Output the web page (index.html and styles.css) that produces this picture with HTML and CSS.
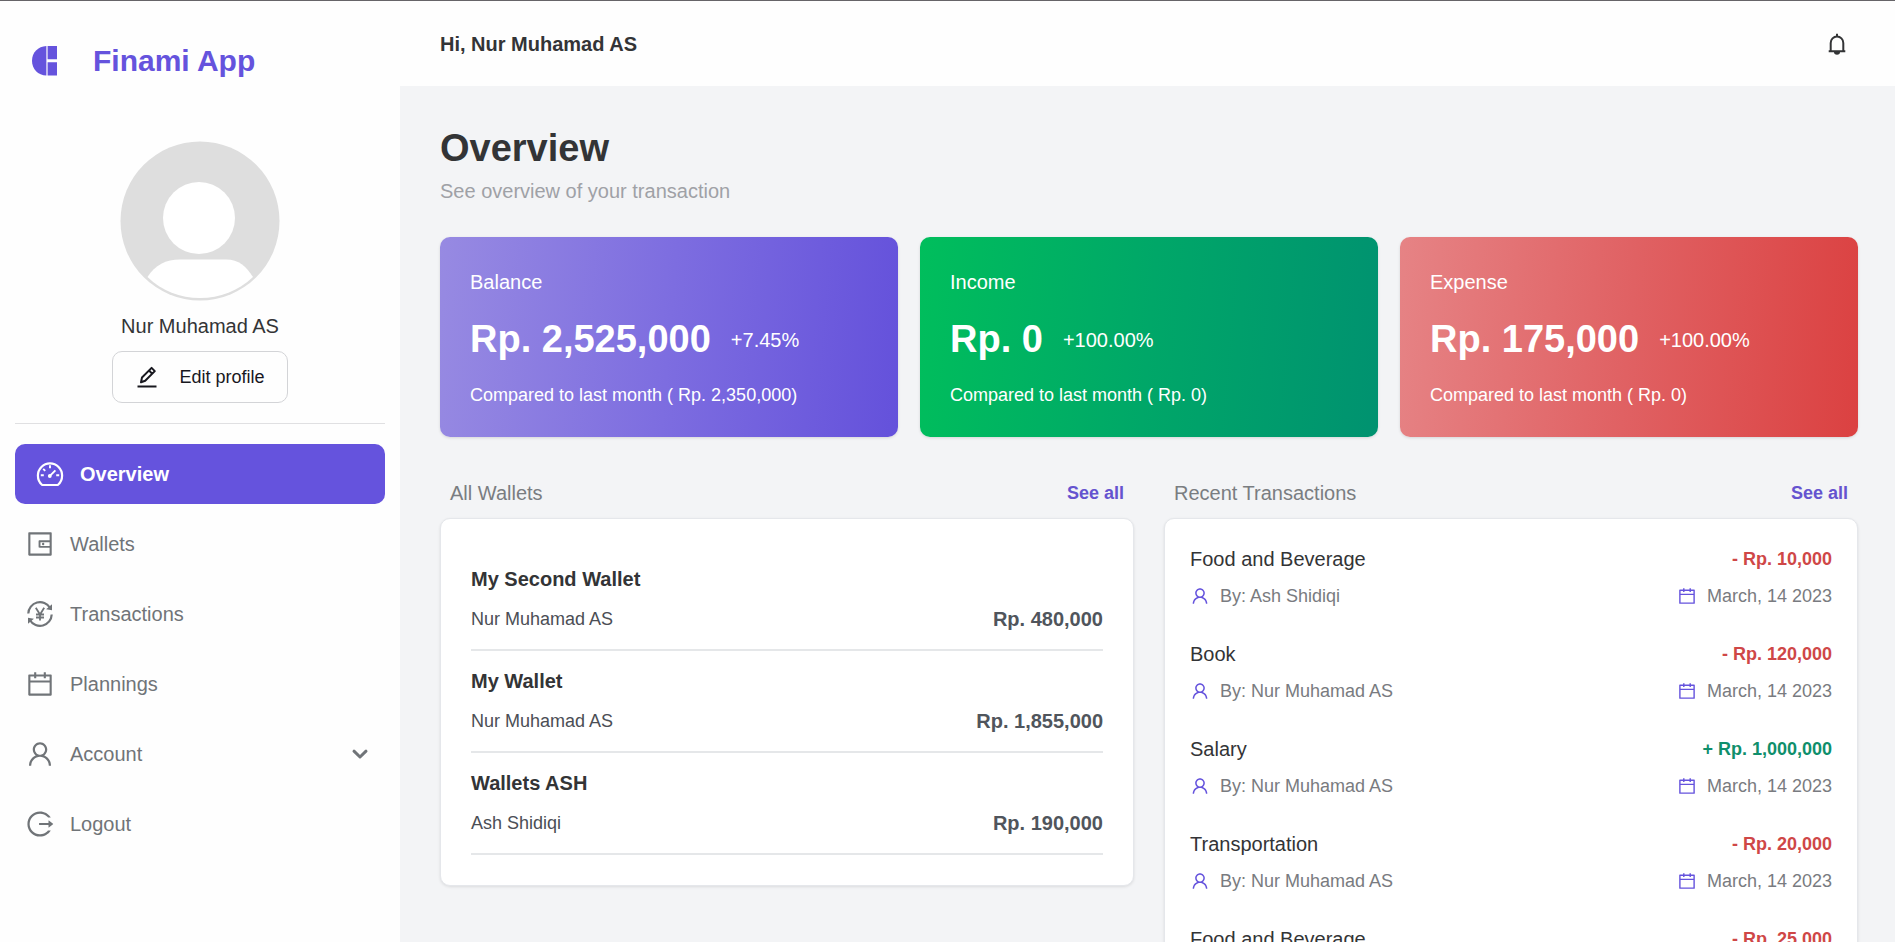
FILE: index.html
```html
<!DOCTYPE html>
<html lang="en">
<head>
<meta charset="utf-8">
<title>Finami App</title>
<meta name="viewport" content="width=device-width, initial-scale=1">
<link rel="stylesheet" href="styles.css">
</head>
<body>
<svg class="sprite" aria-hidden="true">
  <symbol id="user" viewBox="0 0 1024 1024"><path d="M858.5 763.6a374 374 0 0 0-80.6-119.5 375.63 375.63 0 0 0-119.5-80.6c-.4-.2-.8-.3-1.2-.5C719.5 518 760 444.7 760 362c0-137-111-248-248-248S264 225 264 362c0 82.700 40.500 156 102.800 201.100-.4.2-.8.3-1.200.5-44.800 18.900-85 46-119.500 80.600a375.630 375.630 0 0 0-80.600 119.500A371.700 371.700 0 0 0 136 901.800a8 8 0 0 0 8 8.200h60c4.400 0 7.900-3.500 8-7.800 2-77.200 33-149.500 87.800-204.300 56.700-56.700 132-87.900 212.200-87.900s155.500 31.200 212.200 87.900C779 752.700 810 825 812 902.200c.1 4.400 3.600 7.800 8 7.800h60a8 8 0 0 0 8-8.200c-1-47.800-10.900-94.300-29.500-138.200zM512 534c-45.900 0-89.100-17.900-121.600-50.400S340 407.900 340 362c0-45.900 17.900-89.100 50.400-121.600S466.100 190 512 190s89.100 17.900 121.600 50.400S684 316.100 684 362c0 45.900-17.900 89.100-50.400 121.600S557.900 534 512 534z"/></symbol>
  <symbol id="calendar" viewBox="0 0 1024 1024"><path d="M880 184H712v-64c0-4.400-3.600-8-8-8h-56c-4.400 0-8 3.600-8 8v64H384v-64c0-4.400-3.600-8-8-8h-56c-4.400 0-8 3.600-8 8v64H144c-17.700 0-32 14.300-32 32v664c0 17.700 14.300 32 32 32h736c17.700 0 32-14.300 32-32V216c0-17.700-14.300-32-32-32zm-40 656H184V460h656v380zM184 392V256h128v48c0 4.400 3.600 8 8 8h56c4.400 0 8-3.600 8-8v-48h256v48c0 4.400 3.600 8 8 8h56c4.400 0 8-3.600 8-8v-48h128v136H184z"/></symbol>
  <symbol id="wallet" viewBox="0 0 1024 1024"><path d="M880 112H144c-17.700 0-32 14.300-32 32v736c0 17.700 14.300 32 32 32h736c17.700 0 32-14.300 32-32V144c0-17.700-14.300-32-32-32zm-40 464H528V448h312v128zm0 264H184V184h656v200H496c-17.700 0-32 14.300-32 32v192c0 17.700 14.300 32 32 32h344v200zM580 512a40 40 0 1 0 80 0 40 40 0 1 0-80 0z"/></symbol>
  <symbol id="logout" viewBox="0 0 1024 1024"><path d="M868 732h-70.300c-4.800 0-9.300 2.100-12.300 5.800-7 8.500-14.500 16.700-22.400 24.500a353.840 353.840 0 0 1-112.700 75.900A352.800 352.800 0 0 1 512.400 866c-47.900 0-94.300-9.400-137.900-27.800a353.840 353.840 0 0 1-112.700-75.900 353.280 353.280 0 0 1-76-112.500C167.300 606.200 158 559.900 158 512s9.400-94.200 27.800-137.800c17.800-42.100 43.400-80 76-112.500s70.500-58.100 112.700-75.900c43.600-18.400 90-27.800 137.900-27.800 47.900 0 94.300 9.300 137.900 27.800 42.200 17.800 80.100 43.400 112.700 75.900 7.900 7.900 15.300 16.100 22.400 24.500 3 3.700 7.600 5.800 12.300 5.800H868c6.300 0 10.200-7 6.700-12.300C798 160.500 663.800 81.600 511.300 82 271.700 82.600 79.600 277.100 82 516.400 84.400 751.900 276.200 942 512.400 942c152.100 0 285.700-78.800 362.300-197.700 3.400-5.300-.4-12.300-6.700-12.300zm88.900-226.300L815 393.700c-5.300-4.200-13-.4-13 6.300v76H488c-4.400 0-8 3.600-8 8v56c0 4.400 3.600 8 8 8h314v76c0 6.700 7.800 10.500 13 6.300l141.900-112a8 8 0 0 0 0-12.600z"/></symbol>
  <symbol id="dashboard" viewBox="0 0 30 30"><g fill="none" stroke="currentColor" stroke-width="2.200" stroke-linejoin="round"><path d="M7.200 26C4.300 23.700 2.900 20.500 2.900 16.500a12.100 12.100 0 0 1 24.200 0c0 4-1.400 7.200-4.300 9.500z"/><path d="M15 6.200v3M5.800 16.300h3M21.200 16.300h3M8.200 9.800l2 2M14.600 17.200l5.800-5.800" stroke-width="1.900"/></g><circle cx="14.800" cy="17" r="1.900"/></symbol>
  <symbol id="transaction" viewBox="0 0 30 30"><g fill="none" stroke="currentColor" stroke-width="2.200"><path d="M3.300 14.500A11.700 11.700 0 0 1 25 8.800M26.700 15.500A11.700 11.700 0 0 1 5 21.200"/><path d="M10.800 8.800l4.200 6.700 4.200-6.700M15 15.500v6M11 15.500h8M11 18.500h8" stroke-width="1.800"/></g><path d="M27 5.300v5.900l-5.900-1zM3 24.700v-5.900l5.900 1z"/></symbol>
  <symbol id="bell" viewBox="0 0 24 24"><g fill="none" stroke="currentColor" stroke-width="2"><path d="M5.700 18.500V11a6.300 6.500 0 0 1 12.600 0v7.500M3.700 19.200h16.600M12 5V1.800"/></g><path d="M9 20h6a3 2.800 0 0 1-6 0z"/></symbol>
  <symbol id="edit" viewBox="0 0 24 24"><g fill="none" stroke="currentColor" stroke-width="2" stroke-linejoin="round"><path d="M6 17.300l1-4.800 9.600-9.600 3.200 3.200-9.600 9.600zM14 5.500l3.200 3.200"/><path d="M2.500 21.500h19"/></g></symbol>
  <symbol id="chevron" viewBox="0 0 20 20"><path d="M4 7.200l6 5.800 6-5.800" fill="none" stroke="currentColor" stroke-width="3" stroke-linecap="round" stroke-linejoin="round"/></symbol>
</svg>
<div class="app">
  <aside class="sidebar">
    <a class="brand" href="#">
      <svg class="brand-logo" viewBox="0 0 25 30" aria-hidden="true"><path d="M14.400 0v29.500C6 29.500 0 23 0 14.800S6 .3 14.400 0z"/><path d="M15.600 0H25v13.200h-9.400zM15.600 16.200H25v13.300h-9.400z"/></svg>
      <span>Finami App</span>
    </a>
    <div class="profile">
      <svg class="avatar" viewBox="0 0 160 160" role="img" aria-label="Profile picture"><circle cx="80" cy="80" r="79.500" fill="#dedede"/><circle cx="79" cy="77" r="36" fill="#fff"/><path d="M27.500 136C35 124 46 118.500 60 118.500h46c13 0 20 7 27 17.500-15 14-33 21-53 21s-38-7-52.500-21z" fill="#fff"/></svg>
      <p class="profile-name">Nur Muhamad AS</p>
      <button class="edit-button" type="button"><svg class="icon-edit" aria-hidden="true"><use href="#edit"/></svg>Edit profile</button>
    </div>
    <nav class="nav">
      <a class="nav-item active" href="#" aria-current="page"><svg class="icon" aria-hidden="true"><use href="#dashboard"/></svg>Overview</a>
      <a class="nav-item" href="#"><svg class="icon" aria-hidden="true"><use href="#wallet"/></svg>Wallets</a>
      <a class="nav-item" href="#"><svg class="icon" aria-hidden="true"><use href="#transaction"/></svg>Transactions</a>
      <a class="nav-item" href="#"><svg class="icon" aria-hidden="true"><use href="#calendar"/></svg>Plannings</a>
      <button class="nav-item" type="button" aria-expanded="false"><svg class="icon" aria-hidden="true"><use href="#user"/></svg>Account<svg class="chevron" aria-hidden="true"><use href="#chevron"/></svg></button>
      <a class="nav-item" href="#"><svg class="icon" aria-hidden="true"><use href="#logout"/></svg>Logout</a>
    </nav>
  </aside>
  <div class="content">
    <header class="topbar">
      <p class="greeting">Hi, Nur Muhamad AS</p>
      <button class="bell-button" type="button" aria-label="Notifications"><svg class="icon-bell" aria-hidden="true"><use href="#bell"/></svg></button>
    </header>
    <main class="main">
      <h1 class="title">Overview</h1>
      <p class="subtitle">See overview of your transaction</p>
      <section class="stats" aria-label="Summary">
        <article class="stat balance"><h2 class="stat-label">Balance</h2><p class="stat-row"><strong class="stat-amount">Rp. 2,525,000</strong><span>+7.45%</span></p><p class="stat-note">Compared to last month ( Rp. 2,350,000)</p></article>
        <article class="stat income"><h2 class="stat-label">Income</h2><p class="stat-row"><strong class="stat-amount">Rp. 0</strong><span>+100.00%</span></p><p class="stat-note">Compared to last month ( Rp. 0)</p></article>
        <article class="stat expense"><h2 class="stat-label">Expense</h2><p class="stat-row"><strong class="stat-amount">Rp. 175,000</strong><span>+100.00%</span></p><p class="stat-note">Compared to last month ( Rp. 0)</p></article>
      </section>
      <div class="columns">
        <section>
          <div class="section-head"><h2 class="section-title">All Wallets</h2><a class="see-all" href="#">See all</a></div>
          <ul class="panel wallets">
            <li class="wallet"><h3 class="wallet-name">My Second Wallet</h3><div class="line"><span class="owner">Nur Muhamad AS</span><span class="wallet-amount">Rp. 480,000</span></div></li>
            <li class="wallet"><h3 class="wallet-name">My Wallet</h3><div class="line"><span class="owner">Nur Muhamad AS</span><span class="wallet-amount">Rp. 1,855,000</span></div></li>
            <li class="wallet"><h3 class="wallet-name">Wallets ASH</h3><div class="line"><span class="owner">Ash Shidiqi</span><span class="wallet-amount">Rp. 190,000</span></div></li>
          </ul>
        </section>
        <section>
          <div class="section-head"><h2 class="section-title">Recent Transactions</h2><a class="see-all" href="#">See all</a></div>
          <ul class="panel transactions">
            <li class="transaction"><div class="line"><h3 class="category">Food and Beverage</h3><span class="amount">- Rp. 10,000</span></div><div class="line"><span class="meta"><svg class="icon-small" aria-hidden="true"><use href="#user"/></svg>By: Ash Shidiqi</span><span class="meta"><svg class="icon-small" aria-hidden="true"><use href="#calendar"/></svg>March, 14 2023</span></div></li>
            <li class="transaction"><div class="line"><h3 class="category">Book</h3><span class="amount">- Rp. 120,000</span></div><div class="line"><span class="meta"><svg class="icon-small" aria-hidden="true"><use href="#user"/></svg>By: Nur Muhamad AS</span><span class="meta"><svg class="icon-small" aria-hidden="true"><use href="#calendar"/></svg>March, 14 2023</span></div></li>
            <li class="transaction"><div class="line"><h3 class="category">Salary</h3><span class="amount plus">+ Rp. 1,000,000</span></div><div class="line"><span class="meta"><svg class="icon-small" aria-hidden="true"><use href="#user"/></svg>By: Nur Muhamad AS</span><span class="meta"><svg class="icon-small" aria-hidden="true"><use href="#calendar"/></svg>March, 14 2023</span></div></li>
            <li class="transaction"><div class="line"><h3 class="category">Transportation</h3><span class="amount">- Rp. 20,000</span></div><div class="line"><span class="meta"><svg class="icon-small" aria-hidden="true"><use href="#user"/></svg>By: Nur Muhamad AS</span><span class="meta"><svg class="icon-small" aria-hidden="true"><use href="#calendar"/></svg>March, 14 2023</span></div></li>
            <li class="transaction"><div class="line"><h3 class="category">Food and Beverage</h3><span class="amount">- Rp. 25,000</span></div></li>
          </ul>
        </section>
      </div>
    </main>
  </div>
</div>
</body>
</html>
```
FILE: styles.css
```css
* {
  box-sizing: border-box;
  margin: 0;
  padding: 0;
}

body {
  font-family: "Liberation Sans", Arial, sans-serif;
  font-size: 20px;
  line-height: 30px;
  color: #333436;
  background: #f3f4f6;
}

h1, h2, h3 {
  font-size: inherit;
  font-weight: inherit;
}

a {
  color: inherit;
  text-decoration: none;
}

ul {
  list-style: none;
}

button {
  font: inherit;
  color: inherit;
  background: none;
  border: 0;
  cursor: pointer;
}

svg {
  flex: none;
  fill: currentColor;
}

.sprite {
  display: none;
}

.app {
  display: flex;
  height: 100vh;
  overflow: hidden;
  border-top: 1px solid #666468;
}

/* Sidebar */
.sidebar {
  flex: 0 0 400px;
  padding: 0 15px;
  background: #fefefe;
}

.brand {
  display: flex;
  align-items: center;
  gap: 36px;
  padding: 37px 17px 0;
  font-size: 30px;
  line-height: 45px;
  font-weight: 700;
  color: #6553dd;
}

.brand-logo {
  width: 25px;
  height: 30px;
}

.profile {
  display: flex;
  flex-direction: column;
  align-items: center;
  padding: 58px 0 20px;
  border-bottom: 1px solid #e0e0e2;
}

.avatar {
  width: 160px;
  height: 160px;
}

.profile-name {
  padding: 10px 0;
}

.edit-button {
  display: flex;
  align-items: center;
  gap: 20px;
  height: 52px;
  padding: 0 22px;
  font-size: 18px;
  color: #18181f;
  border: 1px solid #d3d4d7;
  border-radius: 10px;
}

.icon-edit {
  width: 24px;
  height: 24px;
}

.nav {
  display: flex;
  flex-direction: column;
  gap: 10px;
  padding-top: 20px;
}

.nav-item {
  display: flex;
  align-items: center;
  gap: 15px;
  height: 60px;
  padding: 0 15px 0 10px;
  color: #707478;
  border-radius: 10px;
}

.nav-item.active {
  padding-left: 20px;
  font-weight: 700;
  color: #fff;
  background: #6553dd;
}

.icon {
  width: 30px;
  height: 30px;
}

.chevron {
  width: 20px;
  height: 20px;
  margin-left: auto;
}

/* Content */
.content {
  flex: 1;
  min-width: 0;
}

.topbar {
  display: flex;
  align-items: center;
  justify-content: space-between;
  height: 85px;
  padding: 0 46px 0 40px;
  background: #fefefe;
}

.greeting {
  font-weight: 700;
}

.bell-button {
  display: flex;
}

.icon-bell {
  width: 24px;
  height: 24px;
}

.main {
  padding: 40px 37px 40px 40px;
}

.title {
  font-size: 38px;
  line-height: 45px;
  font-weight: 700;
}

.subtitle {
  padding: 5px 0 31px;
  color: #9fa1a6;
}

.stats {
  display: grid;
  grid-template-columns: repeat(3, 1fr);
  gap: 22px;
}

.stat {
  padding: 30px 30px 27px;
  color: #fff;
  border-radius: 10px;
  box-shadow: 0 1px 3px rgba(0, 0, 0, 0.12);
}

.balance {
  background: linear-gradient(95deg, #978ae2, #7d6de0 50%, #6451db);
}

.income {
  background: linear-gradient(95deg, #00be5c, #00a768 50%, #009270);
}

.expense {
  background: linear-gradient(95deg, #e68385, #e06163 50%, #db4141);
}

.stat-row {
  display: flex;
  align-items: center;
  gap: 20px;
  padding: 20px 0 18px;
}

.stat-amount {
  font-size: 38px;
  line-height: 45px;
}

.stat-note {
  font-size: 18px;
}

.columns {
  display: grid;
  grid-template-columns: 1fr 1fr;
  align-items: start;
  gap: 30px;
  padding-top: 41px;
}

.section-head {
  display: flex;
  align-items: center;
  justify-content: space-between;
  padding: 0 10px 10px;
}

.section-title {
  color: #7a7d81;
}

.see-all {
  font-size: 18px;
  font-weight: 700;
  color: #6553cf;
}

.panel {
  background: #fff;
  border: 1px solid #e5e7eb;
  border-radius: 10px;
  box-shadow: 0 1px 3px rgba(0, 0, 0, 0.1);
}

.line {
  display: flex;
  align-items: center;
  justify-content: space-between;
}

.wallets {
  padding: 30px;
}

.wallet {
  display: grid;
  gap: 10px;
  padding: 15px 0;
  border-bottom: 2px solid #e5e7e9;
}

.wallet-name {
  font-weight: 700;
}

.owner {
  font-size: 18px;
  color: #4b4e55;
}

.wallet-amount {
  font-weight: 700;
  color: #50555c;
}

.transactions {
  display: grid;
  gap: 28px;
  padding: 25px;
}

.transaction {
  display: grid;
  gap: 7px;
}

.amount {
  font-size: 18px;
  font-weight: 700;
  color: #cf4747;
}

.amount.plus {
  color: #0f8f6c;
}

.meta {
  display: flex;
  align-items: center;
  gap: 10px;
  font-size: 18px;
  color: #797b80;
}

.icon-small {
  width: 20px;
  height: 20px;
  color: #6553dd;
}
```
